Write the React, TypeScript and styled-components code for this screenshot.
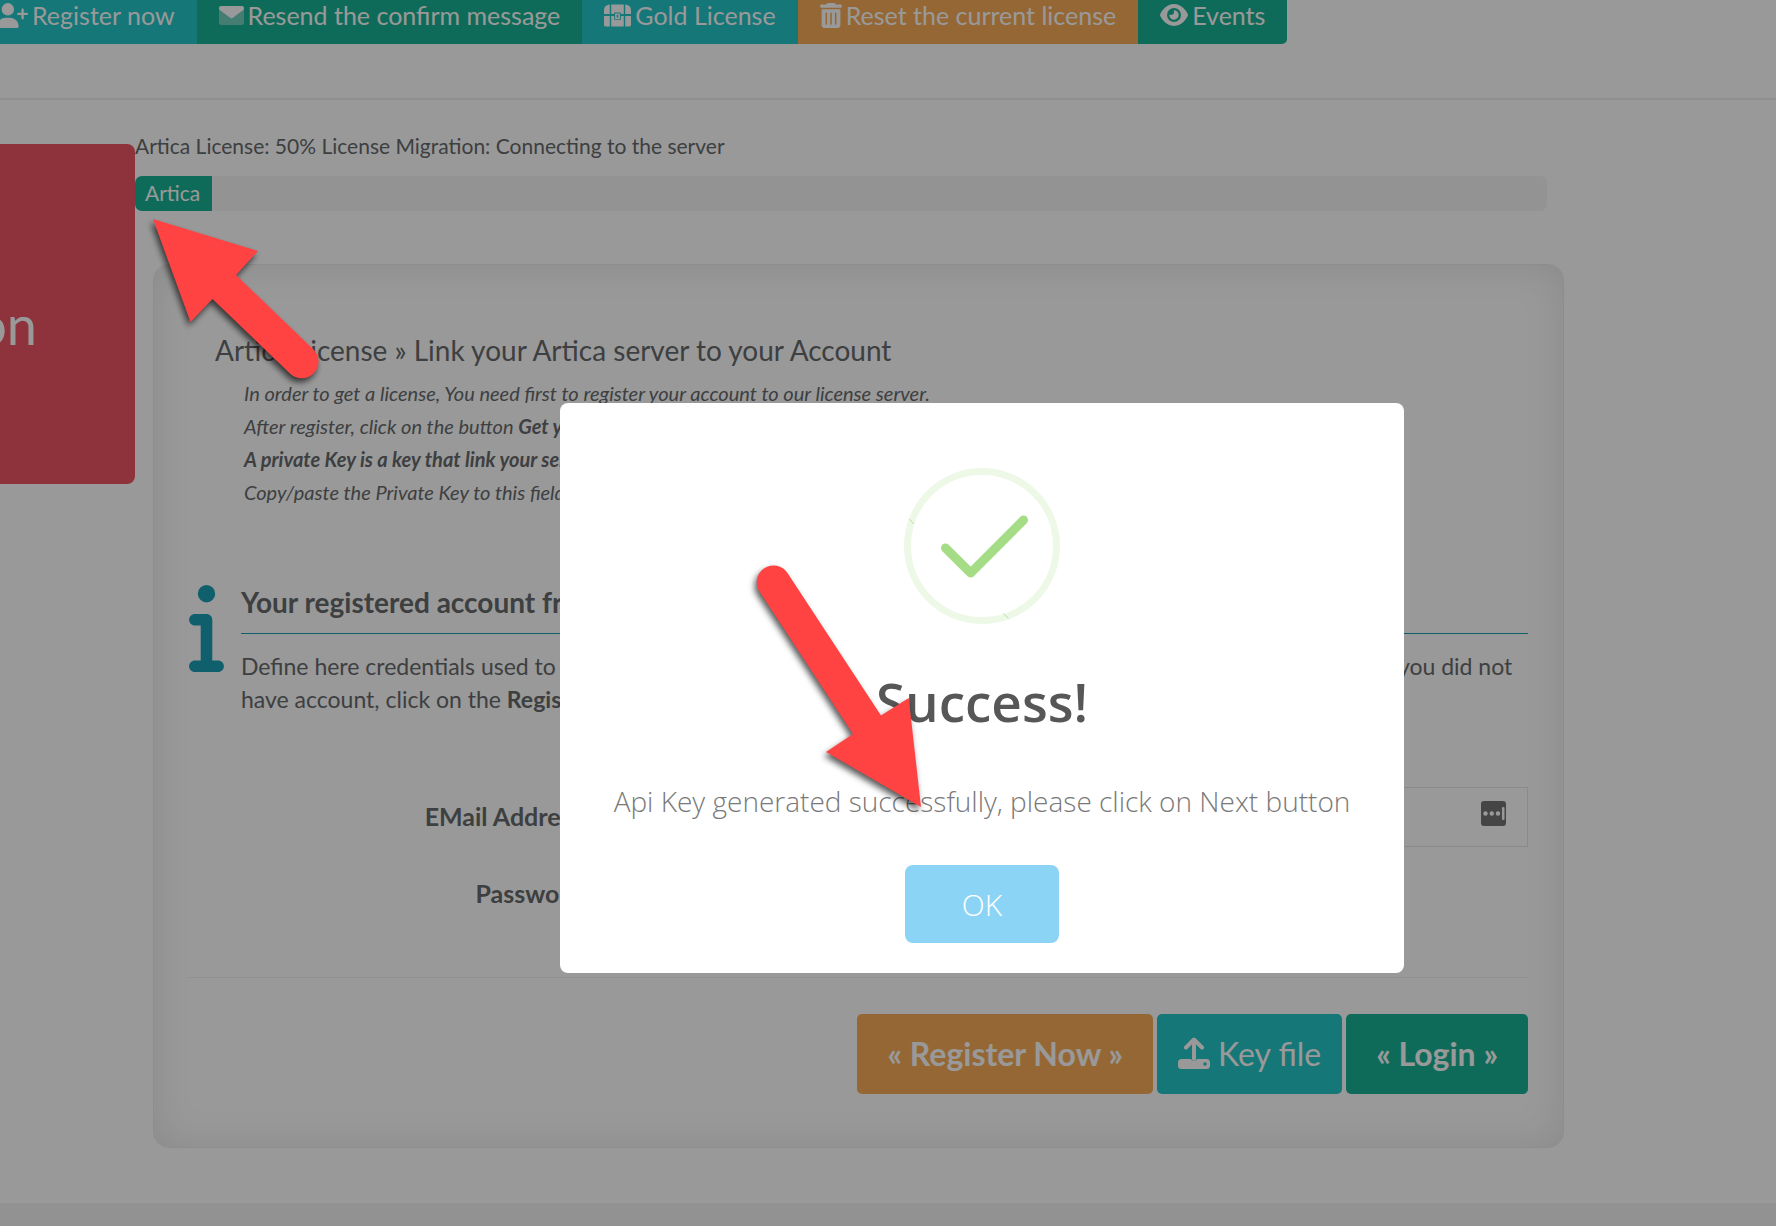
import React from "react";
import styled, { createGlobalStyle } from "styled-components";
import { FaUserPlus, FaEye } from "react-icons/fa6";

const teal = "#23c6c8";
const green = "#1ab394";
const orange = "#f8ac59";
const red = "#ed5565";

const GlobalStyle = createGlobalStyle`
  *, *::before, *::after { box-sizing: border-box; }
  body {
    margin: 0;
    background: #fff;
    color: #676a6c;
    font-family: Lato, "Liberation Sans", sans-serif;
    overflow: hidden;
  }
  button, input { font-family: inherit; }
`;

const Page = styled.div`
  min-height: 100vh;
  display: flex;
  flex-direction: column;
  overflow: hidden;
`;

const Toolbar = styled.nav`
  display: flex;
  height: 58px;
  margin: -14px 0 0 -25px;
`;

const ToolButton = styled.button<{ $tone: string }>`
  display: flex;
  align-items: center;
  gap: 4px;
  padding: 0 22px;
  border: 0;
  background: ${(p) => p.$tone};
  color: #fff;
  font-size: 25px;
  white-space: nowrap;

  &:last-child {
    border-bottom-right-radius: 5px;
  }
`;

const Divider = styled.hr`
  width: 100%;
  height: 2px;
  margin: 54px 0 0;
  border: 0;
  background: #eee;
`;

const Body = styled.div`
  flex: 1;
  display: flex;
  align-items: flex-start;
  padding-right: 212px;
`;

const Widget = styled.aside`
  flex: none;
  display: flex;
  align-items: center;
  justify-content: flex-end;
  width: 135px;
  height: 340px;
  margin-top: 44px;
  padding: 20px 98px 0 0;
  border-radius: 0 8px 8px 0;
  background: ${red};
  color: #fff;
  font-size: 54px;
`;

const Main = styled.main`
  flex: 1;
  min-width: 0;
  padding-top: 31px;
`;

const Status = styled.p`
  margin: 0 0 15px;
  font-size: 21px;
  line-height: 30px;
`;

const Progress = styled.div`
  display: flex;
  height: 35px;
  margin-right: 17px;
  border-radius: 7px;
  background: #f5f5f5;
  overflow: hidden;
`;

const ProgressBar = styled.div`
  padding: 0 12px 0 10px;
  background: ${green};
  color: #fff;
  font-size: 21px;
  line-height: 34px;
`;

const Card = styled.section`
  margin: 53px 0 0 18px;
  padding: 68px 35px 53px;
  border: 1px solid #ebebeb;
  border-radius: 16px;
  box-shadow: inset 0 0 40px rgba(0, 0, 0, 0.1);
`;

const Intro = styled.div`
  padding-left: 26px;
`;

const Title = styled.h2`
  margin: 0;
  font-size: 28px;
  font-weight: 400;
  line-height: 34px;
`;

const Steps = styled.div`
  padding: 10px 0 0 29px;
  font-size: 20px;
  font-style: italic;
  line-height: 33px;
`;

const Info = styled.div`
  display: grid;
  grid-template-columns: 35px 1fr;
  column-gap: 17px;
  margin-top: 76px;
`;

const InfoText = styled.div`
  min-width: 0;

  h3 {
    margin: 0 0 16px;
    padding-bottom: 14px;
    border-bottom: 1px solid #1c9fb5;
    font-size: 28px;
    line-height: 34px;
  }

  p {
    margin: 0;
    font-size: 23px;
    line-height: 33px;
    white-space: nowrap;
  }
`;

const Form = styled.form`
  margin-top: 71px;
`;

const Field = styled.div`
  display: grid;
  grid-template-columns: 400px 1fr;
  align-items: center;
  column-gap: 26px;
  margin-bottom: 17px;

  label {
    padding-bottom: 2px;
    font-size: 25px;
    font-weight: 700;
    text-align: right;
  }
`;

const InputWrap = styled.div`
  position: relative;
`;

const TextInput = styled.input<{ $width: string }>`
  display: block;
  width: ${(p) => p.$width};
  height: 60px;
  padding: 0 60px 0 12px;
  border: 1px solid #e5e6e7;
  background: #fff;
  font-size: 25px;
  outline: 0;
`;

const KeyBadge = styled.svg`
  position: absolute;
  top: 14px;
  right: 21px;
`;

const Actions = styled.div`
  display: flex;
  align-items: flex-start;
  justify-content: flex-end;
  gap: 4px;
  margin-top: 53px;
  padding-top: 36px;
  border-top: 1px solid #eee;
`;

const ActionButton = styled.button<{ $tone: string; $strong?: boolean }>`
  display: flex;
  align-items: center;
  justify-content: center;
  gap: 8px;
  height: 80px;
  padding: 0 ${(p) => (p.$strong ? 30 : 21)}px 2px;
  border: 0;
  border-radius: 5px;
  background: ${(p) => p.$tone};
  color: #fff;
  font-size: 32px;
  font-weight: ${(p) => (p.$strong ? 700 : 400)};
  white-space: nowrap;
`;

const Footer = styled.footer`
  height: 23px;
  background: #f3f3f4;
`;

const Overlay = styled.div`
  position: fixed;
  inset: 0;
  display: flex;
  justify-content: center;
  align-items: flex-start;
  padding: 403px 0 0 188px;
  background: rgba(0, 0, 0, 0.4);
`;

const Dialog = styled.div`
  display: flex;
  flex-direction: column;
  align-items: center;
  width: 844px;
  padding: 65px 30px 30px;
  border-radius: 8px;
  background: #fff;
  font-family: "Open Sans", "Noto Sans", sans-serif;

  h2 {
    margin: 42px 0 0;
    color: #575757;
    font-size: 53px;
    font-weight: 600;
    line-height: 72px;
  }

  p {
    margin: 39px 0 0;
    color: #797979;
    font-size: 28px;
    font-weight: 300;
    line-height: 48px;
    white-space: nowrap;
  }
`;

const OkButton = styled.button`
  width: 154px;
  height: 78px;
  margin-top: 40px;
  border: 0;
  border-radius: 8px;
  background: #8cd4f5;
  color: #fff;
  font-size: 30px;
  font-weight: 300;
`;

const Arrows = styled.svg`
  position: fixed;
  top: 0;
  left: 0;
  pointer-events: none;
  filter: drop-shadow(-2px 4px 3px rgba(0, 0, 0, 0.65));
`;

const EnvelopeIcon = () => (
  <svg width="25" height="19" viewBox="0 0 25 19" fill="#fff">
    <rect width="25" height="19" rx="2.5" opacity="0.4" />
    <path d="M2.3 0h20.4A2.3 2.3 0 0 1 25 2.3c0 .9-.4 1.5-1 2l-9.800 7.300a3 3 0 0 1-3.400 0L1 4.300C.4 3.800 0 3.200 0 2.300A2.300 2.300 0 0 1 2.300 0z" />
  </svg>
);

const ChestIcon = () => (
  <svg width="27" height="23" viewBox="0 0 28 23" fill="#fff">
    <path d="M6 0v10H0V6a6 6 0 0 1 6-6zM7.500 0h13v10h-3V8.500h-7V10h-3zM22 0a6 6 0 0 1 6 6v4h-6zM0 12h6v11H2a2 2 0 0 1-2-2zM7.500 12h3v4h7v-4h3v11h-13zM22 12h6v9a2 2 0 0 1-2 2h-4z" />
    <path d="M11.500 9.500h5v5.500h-5zM13.200 10.800v2.900h1.600v-2.900z" fillRule="evenodd" />
  </svg>
);

const TrashIcon = () => (
  <svg width="22" height="25" viewBox="0 0 448 512" fill="#fff">
    <path d="M135.200 17.700C140.600 6.800 151.700 0 163.800 0H284.200c12.100 0 23.200 6.800 28.600 17.700L320 32h96c17.700 0 32 14.300 32 32s-14.300 32-32 32H32C14.300 96 0 81.700 0 64S14.300 32 32 32h96l7.200-14.300zM32 128H416V448c0 35.300-28.700 64-64 64H96c-35.300 0-64-28.700-64-64V128zm96 64c-8.800 0-16 7.200-16 16V432c0 8.800 7.200 16 16 16s16-7.200 16-16V208c0-8.800-7.200-16-16-16zm96 0c-8.800 0-16 7.200-16 16V432c0 8.800 7.200 16 16 16s16-7.200 16-16V208c0-8.800-7.200-16-16-16zm96 0c-8.800 0-16 7.200-16 16V432c0 8.800 7.200 16 16 16s16-7.200 16-16V208c0-8.800-7.200-16-16-16z" />
  </svg>
);

const UploadIcon = () => (
  <svg width="32" height="32" viewBox="0 0 32 32" fill="none">
    <path
      d="M3.500 22H13a3.300 3.300 0 0 0 6 0h9.500a3.500 3.500 0 0 1 3.500 3.500v3a3.500 3.500 0 0 1-3.500 3.500h-25A3.500 3.500 0 0 1 0 28.500v-3A3.500 3.500 0 0 1 3.500 22zM27 25.300a1.700 1.700 0 1 0 0 3.400 1.700 1.700 0 0 0 0-3.400z"
      fill="#fff"
      fillRule="evenodd"
    />
    <path
      d="M16 22V3M8 10.500l8-8 8 8"
      stroke="#fff"
      strokeWidth="4"
      strokeLinecap="round"
      strokeLinejoin="round"
    />
  </svg>
);

const SuccessIcon = () => (
  <svg width="156" height="156" viewBox="0 0 156 156" fill="none">
    <circle cx="78" cy="78" r="74.500" stroke="#edf8e7" strokeWidth="7" />
    <path d="M5 51l5 5M99.500 145.500l5 5" stroke="#b5e29c" strokeWidth="1" />
    <path
      d="M41.500 80l25.200 25L119.500 52"
      stroke="#a5dc86"
      strokeWidth="9"
      strokeLinecap="round"
      strokeLinejoin="round"
    />
  </svg>
);

export default function App() {
  return (
    <>
      <GlobalStyle />
      <Page>
        <Toolbar>
          <ToolButton type="button" $tone={teal}>
            <FaUserPlus size={31} />
            Register now
          </ToolButton>
          <ToolButton type="button" $tone={green}>
            <EnvelopeIcon />
            Resend the confirm message
          </ToolButton>
          <ToolButton type="button" $tone={teal}>
            <ChestIcon />
            Gold License
          </ToolButton>
          <ToolButton type="button" $tone={orange}>
            <TrashIcon />
            Reset the current license
          </ToolButton>
          <ToolButton type="button" $tone={green}>
            <FaEye size={28} />
            Events
          </ToolButton>
        </Toolbar>
        <Divider />
        <Body>
          <Widget>on</Widget>
          <Main>
            <Status>Artica License: 50% License Migration: Connecting to the server</Status>
            <Progress>
              <ProgressBar>Artica</ProgressBar>
            </Progress>
            <Card>
              <Intro>
                <Title>Artica License » Link your Artica server to your Account</Title>
                <Steps>
                  In order to get a license, You need first to register your account to our license server.
                  <br />
                  After register, click on the button <b>Get your key</b>
                  <br />
                  <b>A private Key is a key that link your server</b>
                  <br />
                  Copy/paste the Private Key to this field
                </Steps>
              </Intro>
              <Info>
                <svg width="35" height="87" viewBox="0 32 192 480" fill="#1c9fb5">
                  <path d="M48 80a48 48 0 1 1 96 0A48 48 0 1 1 48 80zM0 224c0-17.700 14.300-32 32-32H96c17.700 0 32 14.300 32 32V448h32c17.700 0 32 14.300 32 32s-14.300 32-32 32H32c-17.700 0-32-14.300-32-32s14.300-32 32-32H64V256H32c-17.700 0-32-14.300-32-32z" />
                </svg>
                <InfoText>
                  <h3>Your registered account from</h3>
                  <p>
                    Define here credentials used to access to your account on the Artica license server and then get the private keys. If you did not
                    <br />
                    have account, click on the <b>Register Now</b> button
                  </p>
                </InfoText>
              </Info>
              <Form onSubmit={(e) => e.preventDefault()}>
                <Field>
                  <label htmlFor="email">EMail Address:</label>
                  <InputWrap>
                    <TextInput id="email" type="text" $width="100%" />
                    <KeyBadge width="26" height="25" viewBox="0 0 26 25">
                      <rect width="25" height="25" rx="3" fill="#747474" />
                      <g fill="#fff">
                        <circle cx="4.500" cy="12.500" r="2.200" />
                        <circle cx="10.800" cy="12.500" r="2.200" />
                        <circle cx="17" cy="12.500" r="2.200" />
                        <rect x="21" y="6" width="2.500" height="13" rx="1" />
                      </g>
                    </KeyBadge>
                  </InputWrap>
                </Field>
                <Field>
                  <label htmlFor="password">Password:</label>
                  <TextInput id="password" type="password" $width="50%" />
                </Field>
                <Actions>
                  <ActionButton type="button" $tone={orange} $strong>
                    « Register Now »
                  </ActionButton>
                  <ActionButton type="button" $tone={teal}>
                    <UploadIcon />
                    Key file
                  </ActionButton>
                  <ActionButton type="submit" $tone={green} $strong>
                    « Login »
                  </ActionButton>
                </Actions>
              </Form>
            </Card>
          </Main>
        </Body>
        <Footer />
      </Page>
      <Overlay>
        <Dialog role="dialog" aria-labelledby="dialog-title">
          <SuccessIcon />
          <h2 id="dialog-title">Success!</h2>
          <p>Api Key generated successfully, please click on Next button</p>
          <OkButton type="button">OK</OkButton>
        </Dialog>
      </Overlay>
      <Arrows width="1000" height="850" viewBox="0 0 1000 850" fill="#ff4343">
        <path d="M153 219L258 251L236 275L313.500 349.500A16.700 16.700 0 0 1 290 373.500L212.500 299L190.500 322Z" />
        <path d="M921 807L908.700 698L881 715.500L787.500 573A16.500 16.500 0 0 0 759.500 591.500L853 734L826 752Z" />
      </Arrows>
    </>
  );
}
